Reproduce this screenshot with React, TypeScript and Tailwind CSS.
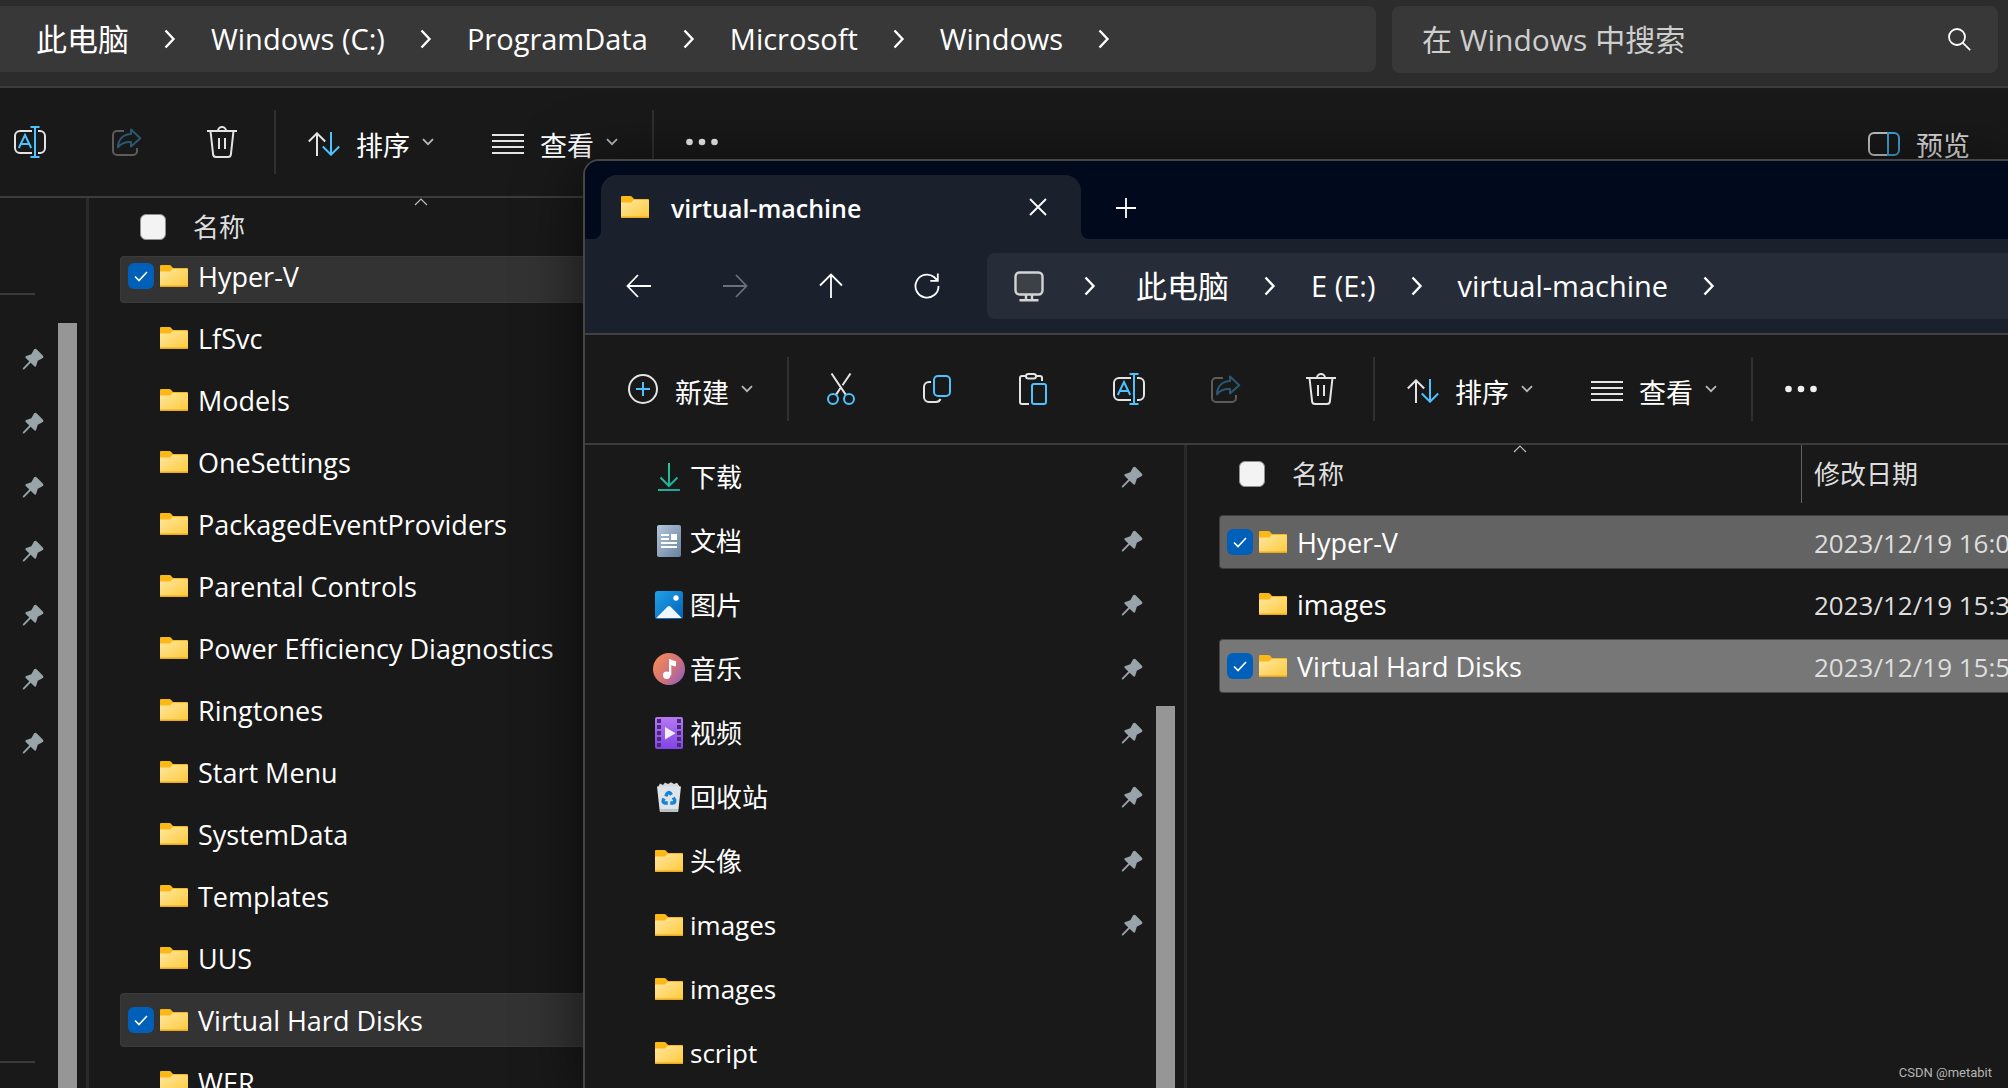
import type { ReactNode } from 'react'

type IconProps = { className?: string }

const BLUE = '#4cc2ff'
const LIGHT = '#e4e4e4'

function FolderIcon({ className = '' }: IconProps) {
  return (
    <svg className={`shrink-0 ${className}`} width="28" height="22" viewBox="0 0 28 22" aria-hidden="true">
      <defs>
        <linearGradient id="folderFront" x1="0" y1="0" x2="1" y2="1">
          <stop offset="0" stopColor="#ffe7a0" />
          <stop offset="1" stopColor="#ffc93a" />
        </linearGradient>
      </defs>
      <path d="M1.2 0h8.2c.6 0 1 .2 1.400.6L13 3h14a1 1 0 0 1 1 1v8H0V1.200C0 .5.5 0 1.200 0Z" fill="#fbb917" />
      <path d="M0 6.500h9.200c.6 0 1-.2 1.400-.6L12.500 4H27a1 1 0 0 1 1 1v16a1 1 0 0 1-1 1H1a1 1 0 0 1-1-1Z" fill="url(#folderFront)" />
      <path d="M0 20.500h28v.5a1 1 0 0 1-1 1H1a1 1 0 0 1-1-1Z" fill="#eba91b" />
    </svg>
  )
}

function PinIcon({ className = '' }: IconProps) {
  return (
    <svg className={`shrink-0 ${className}`} width="22" height="22" viewBox="0 0 22 22" aria-hidden="true">
      <path
        d="M12 1.600c.7-.9 2-1 2.800-.2l6 6c.9.9.7 2.300-.4 2.900l-4.600 2.500-1.600 5c-.3.9-1.300 1.100-1.900.5l-3.600-3.600-6.400 6.600-1.600.3.300-1.600 6.300-6.500-3.500-3.500c-.7-.7-.4-1.700.5-2l5-1.700Z"
        fill="#98a3aa"
      />
    </svg>
  )
}

function ChevronRight() {
  return (
    <svg className="shrink-0" width="12" height="20" viewBox="0 0 12 20" fill="none" stroke="#fff" strokeWidth="2.400" aria-hidden="true">
      <path d="M1.500 1.500 9.500 10l-8 8.500" />
    </svg>
  )
}

function ChevronDown() {
  return (
    <svg className="shrink-0" width="12" height="8" viewBox="0 0 12 8" fill="none" stroke="#b8b8b8" strokeWidth="1.800" aria-hidden="true">
      <path d="m1 1.200 5 5 5-5" />
    </svg>
  )
}

function Svg32({ children }: { children: ReactNode }) {
  return (
    <svg className="shrink-0" width="32" height="32" viewBox="0 0 32 32" fill="none" strokeWidth="2" stroke={LIGHT} aria-hidden="true">
      {children}
    </svg>
  )
}

const NewIcon = () => (
  <Svg32>
    <circle cx="16" cy="16" r="14" />
    <path d="M16 9v14M9 16h14" stroke={BLUE} />
  </Svg32>
)

const CutIcon = () => (
  <Svg32>
    <path d="M6.500.5 20.700 21.600M25.500.5l-8 11.700M15.300 15.200l-4.200 6.400" />
    <circle cx="8" cy="26" r="5" stroke={BLUE} />
    <circle cx="24" cy="26" r="5" stroke={BLUE} />
  </Svg32>
)

const CopyIcon = () => (
  <Svg32>
    <path d="M10 9H8a5 5 0 0 0-5 5v10a5 5 0 0 0 5 5h7a5 5 0 0 0 4.500-3" />
    <rect x="13" y="3" width="16" height="20" rx="4" stroke={BLUE} />
  </Svg32>
)

const PasteIcon = () => (
  <Svg32>
    <path d="M9 3H5a2 2 0 0 0-2 2v24a2 2 0 0 0 2 2h7M19 3h4a2 2 0 0 1 2 2v3" />
    <rect x="9" y="1" width="10" height="4.600" rx="2.300" />
    <rect x="15" y="11" width="14" height="20" rx="2" stroke={BLUE} />
  </Svg32>
)

const RenameIcon = () => (
  <Svg32>
    <path d="M18 5H6a5 5 0 0 0-5 5v12a5 5 0 0 0 5 5h12M24 5h2a5 5 0 0 1 5 5v12a5 5 0 0 1-5 5h-2" />
    <path d="M21 1v30M16.500 1h9M16.500 31h9M4.800 22l6.200-13 6.200 13M7 18h8" stroke={BLUE} />
  </Svg32>
)

const ShareIcon = () => (
  <Svg32>
    <path d="M14 5H7a4 4 0 0 0-4 4v16a4 4 0 0 0 4 4h16a4 4 0 0 0 4-4v-3" stroke="#5c5c5c" />
    <path d="m21 3.500 9.300 8.700L21 20.500V16c-6-.3-10 1.200-13 5.500C8 13.500 13 8.300 21 8Z" stroke="#2a5872" strokeLinejoin="round" />
  </Svg32>
)

const TrashIcon = () => (
  <Svg32>
    <path d="M1 5h30M12 5a4 4 0 0 1 8 0M4.500 5l2.600 23.300A3 3 0 0 0 10.100 31h11.800a3 3 0 0 0 3-2.700L27.500 5M13 12v11M19 12v11" />
  </Svg32>
)

const SortIcon = () => (
  <svg className="shrink-0" width="32" height="24" viewBox="0 0 32 24" fill="none" strokeWidth="2" aria-hidden="true">
    <path d="M9 24V1.500M.8 9.500 9 1.300l8.200 8.200" stroke={LIGHT} />
    <path d="M23 0v22.500M14.800 14.500l8.200 8.200 8.200-8.200" stroke={BLUE} />
  </svg>
)

const ViewIcon = () => (
  <svg className="shrink-0" width="32" height="20" viewBox="0 0 32 20" fill="none" strokeWidth="2" stroke={LIGHT} aria-hidden="true">
    <path d="M0 1h32M0 7h32M0 13h32M0 19h32" />
  </svg>
)

const PreviewIcon = () => (
  <svg className="shrink-0" width="32" height="24" viewBox="0 0 32 24" fill="none" strokeWidth="2" aria-hidden="true">
    <path d="M19 1H6a5 5 0 0 0-5 5v12a5 5 0 0 0 5 5h13" stroke="#c4c4c4" />
    <path d="M20 1h6a5 5 0 0 1 5 5v12a5 5 0 0 1-5 5h-6Z" stroke="#3fa4d8" />
  </svg>
)

const MoreIcon = () => (
  <svg className="shrink-0" width="32" height="8" viewBox="0 0 32 8" fill="#f0f0f0" aria-hidden="true">
    <circle cx="3.500" cy="4" r="3.300" />
    <circle cx="16" cy="4" r="3.300" />
    <circle cx="28.500" cy="4" r="3.300" />
  </svg>
)

const MonitorIcon = () => (
  <svg className="shrink-0" width="30" height="31" viewBox="0 0 30 31" fill="none" stroke="#d2d4d6" strokeWidth="2.400" aria-hidden="true">
    <rect x="1.500" y="1.500" width="27" height="22" rx="4" fill="#3c4148" />
    <path d="M12 24v5M18 24v5M5.500 29.200h19" />
  </svg>
)

const SearchIcon = () => (
  <svg className="shrink-0" width="23" height="23" viewBox="0 0 23 23" fill="none" stroke="#fff" strokeWidth="1.800" aria-hidden="true">
    <circle cx="9" cy="9" r="8" />
    <path d="m14.600 14.600 7.600 7.600" />
  </svg>
)

const DownloadIcon = () => (
  <svg width="22" height="28" viewBox="0 0 22 28" fill="none" strokeWidth="2" aria-hidden="true">
    <defs>
      <linearGradient id="dl" x1="0" y1="0" x2="22" y2="28" gradientUnits="userSpaceOnUse">
        <stop offset="0" stopColor="#35cf92" />
        <stop offset="1" stopColor="#12a3a0" />
      </linearGradient>
    </defs>
    <path d="M11 0v23M2.500 14.500 11 23l8.500-8.500M0 27h22" stroke="url(#dl)" />
  </svg>
)

const DocumentIcon = () => (
  <svg width="24" height="32" viewBox="0 0 24 32" aria-hidden="true">
    <defs>
      <linearGradient id="doc" x1="0" y1="0" x2="1" y2="1">
        <stop offset="0" stopColor="#b4c6da" />
        <stop offset="1" stopColor="#67829f" />
      </linearGradient>
    </defs>
    <rect width="24" height="32" rx="2" fill="url(#doc)" />
    <path d="M4 9h8v2H4zM4 13h8v2H4zM4 17h16v2H4zM4 21h16v2H4zM14 9h6v6h-6z" fill="#fff" />
  </svg>
)

const PictureIcon = () => (
  <svg width="28" height="28" viewBox="0 0 28 28" aria-hidden="true">
    <defs>
      <linearGradient id="pic" x1="0" y1="0" x2="1" y2="1">
        <stop offset="0" stopColor="#1fa3ea" />
        <stop offset="1" stopColor="#0560b5" />
      </linearGradient>
    </defs>
    <rect width="28" height="28" rx="2.500" fill="url(#pic)" />
    <circle cx="21" cy="7" r="2.700" fill="#fff" />
    <path d="M1.300 27 12.700 15.500a2 2 0 0 1 2.700 0L26.700 27Z" fill="#f0f7fd" />
  </svg>
)

const MusicIcon = () => (
  <svg width="32" height="32" viewBox="0 0 32 32" aria-hidden="true">
    <defs>
      <linearGradient id="mus" x1="0" y1=".2" x2="1" y2=".9">
        <stop offset="0" stopColor="#f58a56" />
        <stop offset=".55" stopColor="#d0717c" />
        <stop offset="1" stopColor="#8a5cc0" />
      </linearGradient>
    </defs>
    <circle cx="16" cy="16" r="16" fill="url(#mus)" />
    <circle cx="13.700" cy="22.300" r="3.700" fill="#fff" />
    <path d="M16 22.300V7c0-1 .7-1.300 1.500-.7 1.500 1 3.500 1.500 5.500 2v5c-2 0-3.600-.5-4.700-1.300v10.300Z" fill="#fff" />
  </svg>
)

const VideoIcon = () => (
  <svg width="28" height="32" viewBox="0 0 28 32" aria-hidden="true">
    <defs>
      <linearGradient id="vid" x1="0" y1="0" x2="0" y2="1">
        <stop offset="0" stopColor="#b678f2" />
        <stop offset="1" stopColor="#8144e6" />
      </linearGradient>
    </defs>
    <rect width="28" height="32" rx="2" fill="url(#vid)" />
    <path
      d="M2 2h4v4H2zM2 8h4v4H2zM2 14h4v4H2zM2 20h4v4H2zM2 26h4v4H2zM22 2h4v4h-4zM22 8h4v4h-4zM22 14h4v4h-4zM22 20h4v4h-4zM22 26h4v4h-4z"
      fill="#4a2a74"
    />
    <path d="M10 10v12.500l10.500-6.200Z" fill="#f1eef6" />
  </svg>
)

const RecycleIcon = () => (
  <svg width="24" height="30" viewBox="0 0 24 30" aria-hidden="true">
    <path d="M1 5 3 1.500 6 3l2-2.500L11 2l3-1.800L17 2l3-1.200L23 5v3H1Z" fill="#d5d9dc" />
    <path d="M0 4.500h24L21.300 29a1 1 0 0 1-1 1H3.700a1 1 0 0 1-1-1Z" fill="#dfe4e8" />
    <path d="M3 27h18l-.3 3H3.300Z" fill="#b9c0c6" />
    <g fill="none" stroke="#1583d8" strokeWidth="3.400">
      <path d="M8.700 14.300 10.200 11.500q1.600-2 3.400 0l.8 1.300" />
      <path d="m16.300 15.500 1.300 2.500q.8 2.700-1.800 3h-2.500" />
      <path d="M10.800 21H8q-2.600-.5-1.700-3l.8-1.500" />
    </g>
  </svg>
)

type Crumb = { name: string; han?: boolean }

function Breadcrumbs({ items }: { items: Crumb[] }) {
  return (
    <>
      {items.map((item) => (
        <span key={item.name} className="flex shrink-0 items-center">
          <a href="#" className={`leading-10 whitespace-nowrap text-white ${item.han ? 'text-[31px]' : 'text-[29px]'}`}>
            {item.name}
          </a>
          <span className="flex w-[82px] justify-center">
            <ChevronRight />
          </span>
        </span>
      ))}
    </>
  )
}

function Divider() {
  return <span className="h-16 w-0.5 shrink-0 bg-[#2f2f2f]" />
}

function MenuButton({ icon, label }: { icon: ReactNode; label: string }) {
  return (
    <button type="button" className="flex shrink-0 items-center text-[27px] leading-9 text-white">
      {icon}
      <span className="ml-4 pt-2">{label}</span>
      <span className="ml-3">
        <ChevronDown />
      </span>
    </button>
  )
}

function IconButton({ label, children }: { label: string; children: ReactNode }) {
  return (
    <button type="button" aria-label={label} className="flex shrink-0 items-center justify-center">
      {children}
    </button>
  )
}

function Toolbar({ full, preview }: { full?: boolean; preview?: boolean }) {
  return (
    <div
      className={`flex h-[110px] shrink-0 items-center border-b-2 border-[#3c3c3c] bg-[#191919] ${full ? 'pl-[42px]' : 'pl-[14px]'}`}
    >
      {full && (
        <>
          <MenuButton icon={<NewIcon />} label="新建" />
          <span className="mr-9 ml-[34px] flex">
            <Divider />
          </span>
        </>
      )}
      <div className="flex gap-16">
        {full && (
          <>
            <IconButton label="剪切"><CutIcon /></IconButton>
            <IconButton label="复制"><CopyIcon /></IconButton>
            <IconButton label="粘贴"><PasteIcon /></IconButton>
          </>
        )}
        <IconButton label="重命名"><RenameIcon /></IconButton>
        <IconButton label="共享"><ShareIcon /></IconButton>
        <IconButton label="删除"><TrashIcon /></IconButton>
      </div>
      <span className="mr-8 ml-9 flex">
        <Divider />
      </span>
      <div className="flex gap-[58px]">
        <MenuButton icon={<span className="pt-1"><SortIcon /></span>} label="排序" />
        <MenuButton icon={<span className="pt-1"><ViewIcon /></span>} label="查看" />
      </div>
      <span className="mr-8 ml-[34px] flex">
        <Divider />
      </span>
      <IconButton label="更多"><MoreIcon /></IconButton>
      {preview && (
        <button type="button" className="mr-[38px] ml-auto flex items-center gap-4 text-[27px] leading-9 text-[#dcdcdc]">
          <span className="pt-1"><PreviewIcon /></span>
          <span className="pt-2">预览</span>
        </button>
      )}
    </div>
  )
}

function CheckBox({ id, label, checked }: { id: string; label: string; checked: boolean }) {
  return (
    <span className="relative flex h-[26px] w-[26px] shrink-0">
      <input
        id={id}
        type="checkbox"
        aria-label={label}
        defaultChecked={checked}
        className={`h-[26px] w-[26px] appearance-none rounded-md ${
          checked ? 'bg-[#005fb8]' : 'border border-[#8f8f8f] bg-[#f3f3f3]'
        }`}
      />
      {checked && (
        <svg className="pointer-events-none absolute inset-0" width="26" height="26" viewBox="0 0 26 26" fill="none" stroke="#fff" strokeWidth="1.600" aria-hidden="true">
          <path d="m7 13.500 4 4 8-8.500" />
        </svg>
      )}
    </span>
  )
}

type Row = { name: string; date?: string; tone?: string }

function FileTable({ id, rows, dated }: { id: string; rows: Row[]; dated?: boolean }) {
  return (
    <table className="w-full table-fixed border-collapse text-left">
      <thead>
        <tr>
          <th className={`p-0 align-top font-normal ${dated ? 'h-[70px] w-[583px]' : 'h-[58px]'}`}>
            <div className={`relative flex h-[58px] items-center pl-5 ${dated ? 'border-r border-[#636363]' : ''}`}>
              <CheckBox id={`${id}-all`} label="全选" checked={false} />
              <span className="pl-[27px] text-[26px] leading-9 text-[#dedede]">名称</span>
              <svg
                className="absolute top-0 left-[294px]"
                width="14"
                height="8"
                viewBox="0 0 14 8"
                fill="none"
                stroke="#bdbdbd"
                strokeWidth="1.200"
                aria-hidden="true"
              >
                <path d="m1 7 6-6 6 6" />
              </svg>
            </div>
          </th>
          {dated && (
            <th className="p-0 align-top font-normal">
              <div className="flex h-[58px] items-center pl-3 text-[26px] leading-9 whitespace-nowrap text-[#dedede]">修改日期</div>
            </th>
          )}
        </tr>
      </thead>
      <tbody>
        {rows.map((row, index) => {
          const clipped = !dated && index === 0
          const tone = row.tone ?? 'border-transparent'
          return (
            <tr key={row.name}>
              <td className="overflow-hidden p-0 pb-2 align-top">
                <div className={`${clipped ? 'h-[47px]' : 'h-[54px]'} flex items-end rounded-l-sm border-y border-l ${tone}`}>
                  <div className="flex h-[52px] items-center pl-[7px]">
                    {row.tone ? <CheckBox id={`${id}-${index}`} label={row.name} checked /> : <span className="w-[26px]" />}
                    <FolderIcon className="ml-1.5" />
                    <label htmlFor={`${id}-${index}`} className="ml-2.5 pt-0.5 text-[27px] leading-9 whitespace-nowrap text-white">
                      {row.name}
                    </label>
                  </div>
                </div>
              </td>
              {dated && (
                <td className="overflow-hidden p-0 pb-2 align-top">
                  <div className={`flex h-[54px] items-center border-y pt-0.5 pl-3 text-[26px] leading-9 whitespace-nowrap text-[#dedede] ${tone}`}>
                    {row.date}
                  </div>
                </td>
              )}
            </tr>
          )
        })}
      </tbody>
    </table>
  )
}

function ScrollTrack({ offset }: { offset: string }) {
  return (
    <div className={`mr-[9px] flex w-[19px] shrink-0 flex-col ${offset}`}>
      <div className="flex-1 bg-[#969696]" />
    </div>
  )
}

const selectedDim = 'bg-[#333333] border-[#3a3a3a]'

const backRows: Row[] = [
  { name: 'Hyper-V', tone: selectedDim },
  { name: 'LfSvc' },
  { name: 'Models' },
  { name: 'OneSettings' },
  { name: 'PackagedEventProviders' },
  { name: 'Parental Controls' },
  { name: 'Power Efficiency Diagnostics' },
  { name: 'Ringtones' },
  { name: 'Start Menu' },
  { name: 'SystemData' },
  { name: 'Templates' },
  { name: 'UUS' },
  { name: 'Virtual Hard Disks', tone: selectedDim },
  { name: 'WER' },
]

const frontRows: Row[] = [
  { name: 'Hyper-V', date: '2023/12/19 16:0', tone: 'bg-[#636363] border-[#3d3d3d]' },
  { name: 'images', date: '2023/12/19 15:3' },
  { name: 'Virtual Hard Disks', date: '2023/12/19 15:5', tone: 'bg-[#777777] border-[#484848]' },
]

const places: { name: string; icon: ReactNode; pinned: boolean }[] = [
  { name: '下载', icon: <DownloadIcon />, pinned: true },
  { name: '文档', icon: <DocumentIcon />, pinned: true },
  { name: '图片', icon: <PictureIcon />, pinned: true },
  { name: '音乐', icon: <MusicIcon />, pinned: true },
  { name: '视频', icon: <VideoIcon />, pinned: true },
  { name: '回收站', icon: <RecycleIcon />, pinned: true },
  { name: '头像', icon: <FolderIcon />, pinned: true },
  { name: 'images', icon: <FolderIcon />, pinned: true },
  { name: 'images', icon: <FolderIcon />, pinned: false },
  { name: 'script', icon: <FolderIcon />, pinned: false },
]

const backPath: Crumb[] = [
  { name: '此电脑', han: true },
  { name: 'Windows (C:)' },
  { name: 'ProgramData' },
  { name: 'Microsoft' },
  { name: 'Windows' },
]

const frontPath: Crumb[] = [{ name: '此电脑', han: true }, { name: 'E (E:)' }, { name: 'virtual-machine' }]

function BackWindow() {
  return (
    <section className="flex h-full flex-col bg-[#191919]" aria-label="Windows">
      <header className="flex h-[88px] shrink-0 items-start gap-4 border-b-2 border-[#3c3c3c] bg-[#2c2c2c] pt-1.5 pr-2.5">
        <nav className="flex h-[66px] min-w-0 flex-1 items-center overflow-hidden rounded-r-lg bg-[#383838] pl-9">
          <Breadcrumbs items={backPath} />
        </nav>
        <div className="flex h-[67px] w-[606px] items-center rounded-lg bg-[#383838] pr-[27px] pl-[30px]">
          <input
            type="text"
            aria-label="搜索"
            placeholder="在 Windows 中搜索"
            className="min-w-0 flex-1 bg-transparent text-3xl leading-10 text-white outline-none placeholder:text-[#cecece]"
          />
          <SearchIcon />
        </div>
      </header>
      <Toolbar preview />
      <div className="flex min-h-0 flex-1 overflow-hidden">
        <aside className="flex w-[58px] shrink-0 flex-col pt-[95px]">
          <div className="mr-[23px] h-0.5 shrink-0 bg-[#3a3a3a]" />
          <ul className="mt-8 mb-[286px] flex flex-col">
            {[0, 1, 2, 3, 4, 5, 6].map((n) => (
              <li key={n} className="flex h-16 items-center pl-[22px]">
                <PinIcon />
              </li>
            ))}
          </ul>
          <div className="mr-[23px] h-0.5 shrink-0 bg-[#3a3a3a]" />
        </aside>
        <ScrollTrack offset="pt-[125px]" />
        <div className="w-[3px] shrink-0 bg-[#2a2a2a]" />
        <main className="min-w-0 flex-1 pl-[31px]">
          <FileTable id="back" rows={backRows} />
        </main>
      </div>
    </section>
  )
}

function NavArrow({ label, dim, children }: { label: string; dim?: boolean; children: ReactNode }) {
  return (
    <button type="button" aria-label={label} className="flex w-24 shrink-0 justify-center">
      <svg width="26" height="26" viewBox="0 0 26 26" fill="none" stroke={dim ? '#6b7079' : '#fff'} strokeWidth="1.800" aria-hidden="true">
        {children}
      </svg>
    </button>
  )
}

function FrontWindow() {
  return (
    <section
      className="absolute top-[159px] right-0 bottom-0 left-[583px] flex flex-col overflow-hidden rounded-tl-2xl border-t-2 border-l-2 border-[#454545] bg-[#191919] shadow-[0_8px_64px_rgba(0,0,0,0.6)]"
      aria-label="virtual-machine"
    >
      <div className="flex h-[78px] shrink-0 items-end bg-[#1b212c]">
        <div className="h-full w-4 rounded-br-lg bg-[#000a1c]" />
        <div className="h-full w-[480px] bg-[#000a1c] pt-[14px]">
          <div className="flex h-16 items-center rounded-t-2xl bg-[#1b212c] pr-[34px] pl-5">
            <FolderIcon />
            <span className="ml-[22px] flex-1 pt-0.5 text-[25px] leading-9 font-semibold text-white">virtual-machine</span>
            <button type="button" aria-label="关闭标签页">
              <svg width="18" height="18" viewBox="0 0 18 18" fill="none" stroke="#fff" strokeWidth="1.800" aria-hidden="true">
                <path d="m1 1 16 16M17 1 1 17" />
              </svg>
            </button>
          </div>
        </div>
        <div className="flex h-full flex-1 items-center rounded-bl-lg bg-[#000a1c] pt-4 pl-[35px]">
          <button type="button" aria-label="新标签页">
            <svg width="20" height="20" viewBox="0 0 20 20" fill="none" stroke="#fff" strokeWidth="1.800" aria-hidden="true">
              <path d="M10 0v20M0 10h20" />
            </svg>
          </button>
        </div>
      </div>
      <div className="flex h-24 shrink-0 items-center border-b-2 border-[#3f4145] bg-[#1b212c] pl-1.5">
        <NavArrow label="后退"><path d="M25 13H1.500M12 2 1.500 13 12 24" /></NavArrow>
        <NavArrow label="前进" dim><path d="M1 13h23.500M14 2l10.500 11L14 24" /></NavArrow>
        <NavArrow label="向上"><path d="M13 25V1.500M2 12.500l11-11 11 11" /></NavArrow>
        <NavArrow label="刷新"><path d="M24.500 13A11.500 11.500 0 1 1 20 4l3.500 3.500M23.800.5v7.300h-7.500" /></NavArrow>
        <nav className="ml-3 flex h-[66px] min-w-0 flex-1 items-center overflow-hidden rounded-l-lg bg-[#272d38] pl-[27px]">
          <MonitorIcon />
          <span className="flex w-[92px] shrink-0 justify-center">
            <ChevronRight />
          </span>
          <Breadcrumbs items={frontPath} />
        </nav>
      </div>
      <Toolbar full />
      <div className="flex min-h-0 flex-1 overflow-hidden">
        <ul className="w-[571px] shrink-0">
          {places.map((place, index) => (
            <li key={index} className="flex h-16 items-center pr-[13px] pl-[68px]">
              <span className="flex w-8 shrink-0 justify-center">{place.icon}</span>
              <a href="#" className="ml-[5px] flex-1 text-[26px] leading-9 text-white">
                {place.name}
              </a>
              {place.pinned && <PinIcon />}
            </li>
          ))}
        </ul>
        <ScrollTrack offset="pt-[261px]" />
        <div className="w-[3px] shrink-0 bg-[#2a2a2a]" />
        <main className="min-w-0 flex-1 pl-8">
          <FileTable id="front" rows={frontRows} dated />
        </main>
      </div>
      <span className="absolute right-4 bottom-1.5 font-['Roboto',sans-serif] text-[13px] text-[#b5b5b5]">CSDN @metabit</span>
    </section>
  )
}

export default function App() {
  return (
    <div className="relative h-screen overflow-hidden bg-[#191919] font-['Open_Sans','Noto_Sans_CJK_SC',sans-serif]">
      <BackWindow />
      <FrontWindow />
    </div>
  )
}
